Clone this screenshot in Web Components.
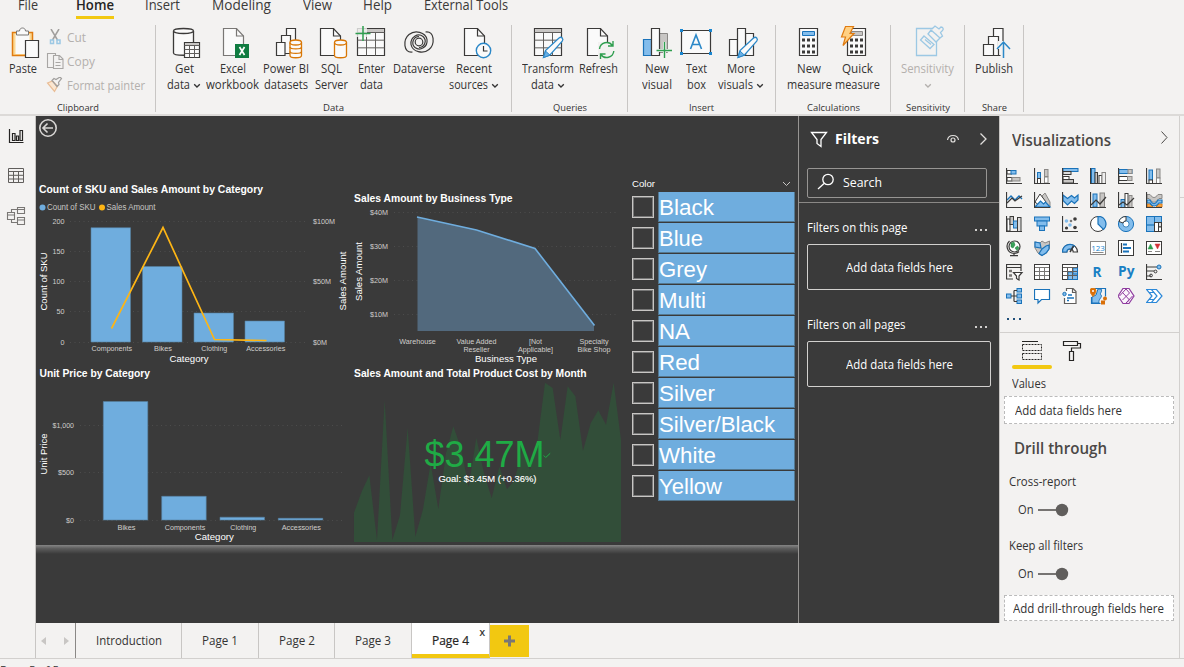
<!DOCTYPE html>
<html lang="en">
<head>
<meta charset="utf-8">
<title>Report editor</title>
<style>
html,body{margin:0;height:667px;overflow:hidden;background:#f3f2f1}
body{font-family:"Open Sans","Noto Sans",sans-serif;font-size:12.3px;color:#333}
</style>
</head>
<body>
<report-app></report-app>
<script>
const define = (name, css, html, extra) => customElements.define(name, class extends HTMLElement {
  connectedCallback() {
    if (this.shadowRoot) return;
    const t = document.createElement('template');
    t.innerHTML = '<style>:host{display:block;box-sizing:border-box}*{box-sizing:border-box}svg{display:block;flex:none}' + css + '</style>' + (typeof html === 'function' ? html(this) : html);
    this.attachShadow({mode: 'open'}).appendChild(t.content.cloneNode(true));
    if (extra) extra(this);
  }
});

/* One line of text condensed or widened to the width given in "w". */
define('fit-text', ':host{display:block;white-space:nowrap;flex:none}span{display:inline-block;transform-origin:0 50%}',
  '<span><slot></slot></span>', el => {
    const w = +el.getAttribute('w'), s = el.shadowRoot.querySelector('span');
    el.style.width = w + 'px';
    const n = s.getBoundingClientRect().width;
    if (n) s.style.transform = `scaleX(${w / n})`;
  });
const ft = (t, w, c = '') => `<fit-text w="${w}" class="${c}">${t}</fit-text>`;
const svg = (x, y, w, h, body, a = '') => `<svg width="${w}" height="${h}" viewBox="${x} ${y} ${w} ${h}" fill="none" ${a}>${body}</svg>`;

/* ---------- ribbon ---------- */
const K = 'stroke="#3b3a39" stroke-width="1.2"', W = 'fill="#fafafa"';
const pageShape = (x, c = '#3b3a39') => `<path d="M${x} 28.5h13l7 7.5v19.500h-20z" ${W} stroke="${c}" stroke-width="1.2"/><path d="M${x + 13} 28.500v7.500h7" stroke="${c}" stroke-width="1.2"/>`;
const grid = (x, y, w, h, hd) => `<path d="M${x} ${y}h${w}v${h}h-${w}z" ${W} ${K}/><path d="M${x + .6} ${y + .5}h${w - 1.200}v${hd}h-${w - 1.2}z" fill="#c8c6c4"/><path d="M${x} ${y + hd}h${w}M${x} ${y + hd + (h - hd) / 3}h${w}M${x} ${y + hd + (h - hd) * 2 / 3}h${w}M${x + w / 3} ${y + hd}v${h - hd}M${x + w * 2 / 3} ${y + hd}v${h - hd}" stroke="#605e5c" stroke-width="1"/>`;
const calc = x => `<path d="M${x} 28.500h18v27h-18z" ${W} ${K}/>` + [38.5, 44.5, 50.5].map(y => [3, 8, 13].map(d => `<path d="M${x + d - .5} ${y}h3v3h-3z" fill="#3b3a39"/>`).join('')).join('');
const pencil = (x) => `<path d="M${x} 57.500l2-7 13.500-12.500c2.500-2 5 .8 3.200 3.200L${x + 6.500} 55z" fill="#fafafa" stroke="#2b88c8" stroke-width="1.300"/><path d="M${x} 57.500l2-6.500 4.500 4.200z" fill="#69afe5" stroke="#2b88c8"/>`;
const cyl = (x, y, w, h, c, mid = '') => `<path d="M${x} ${y}v${h}c0 3 ${w} 3 ${w} 0v-${h}" ${W} stroke="${c}" stroke-width="1.300"/><ellipse cx="${x + w / 2}" cy="${y}" rx="${w / 2}" ry="2.500" ${W} stroke="${c}" stroke-width="1.300"/>${mid}`;
const swirl = 'M412.500 52C403 53.500 403 39.500 409 34.500C415 29.500 425.500 32 427 39.500C428 47 420 51.500 415 47.500C410.500 43.500 413.500 36.500 419 36.500';
const RI = {
  get: cyl(173.500, 31, 20, 22, '#3b3a39') + grid(184.500, 42.500, 15, 15, 3),
  excel: pageShape(222.500, '#797775') + '<path d="M234 44h14v14h-14z" fill="#107c41"/><path d="M238.500 47l5 8M243.500 47l-5 8" stroke="#fff" stroke-width="1.700"/>',
  pbi: `<path d="M286.500 28.500h9v20h-9z" ${W} ${K}/><path d="M281.500 35.500h9v18h-9z" ${W} ${K}/><path d="M276.500 42.500h8.500v13h-8.500z" ${W} ${K}/>` + cyl(290, 42.500, 11.500, 13, '#d97706', '<path d="M290 47c0 2.500 11.500 2.500 11.500 0M290 51.500c0 2.500 11.500 2.500 11.500 0" stroke="#d97706" stroke-width="1.300"/>'),
  sql: pageShape(320.500) + cyl(334.500, 42.500, 12, 13, '#d97706'),
  enter: grid(357.500, 28.500, 27, 27, 4) + '<path d="M355 25h12v12h-12z" fill="#f3f2f1" opacity=".8"/><path d="M363 26v15M355.500 33.500h15" stroke="#2f9e4f" stroke-width="1.500"/>',
  verse: `<g stroke="#3b3a39" stroke-width="1.200" fill="none"><path d="${swirl}"/><path d="${swirl}" transform="rotate(180 419 42)"/><circle cx="419" cy="42" r="3.800"/></g>`,
  recent: pageShape(464.500) + '<circle cx="483.500" cy="50.500" r="7.200" fill="#fafafa" stroke="#2b88c8" stroke-width="1.400"/><path d="M483.500 46v5h4" stroke="#333" stroke-width="1.200"/>',
  transform: grid(534.500, 28.500, 27, 27, 4) + pencil(543.500),
  refresh: pageShape(587.500) + '<path d="M598 42h17v17h-17z" fill="#f3f2f1"/><path d="M599.500 49a7.200 7.200 0 0 1 13-3.500M613.800 51a7.200 7.200 0 0 1-13 3.500M613 41v5h-5M600.500 59v-5h5" stroke="#2f9e4f" stroke-width="1.400"/>',
  visual: `<path d="M643.500 39.500h8v16h-8z" fill="#83bdec" stroke="#1a73ba" stroke-width="1.200"/><path d="M659.500 33.500h8v19h-8z" fill="#c8c6c4" stroke="#8a8886"/><path d="M651.500 28.500h8v27h-8z" ${W} ${K}/><path d="M664.500 42v16M657 50.500h15" stroke="#f3f2f1" stroke-width="3"/><path d="M664.500 42v16M656.500 50.500h15.500" stroke="#2f9e4f" stroke-width="1.400"/>`,
  text: `<path d="M681.500 30.500h29v23h-29z" ${W} ${K}/><path d="M680 29h3v3h-3zM709 29h3v3h-3zM680 52h3v3h-3zM709 52h3v3h-3z" fill="#1a86d0"/><path d="M690.500 49l5.500-14 5.500 14M692.500 44.500h7" stroke="#2b88c8" stroke-width="1.600"/>`,
  more: `<path d="M729.500 39.500h8v16h-8z" ${W} ${K}/><path d="M745.500 33.500h8v22h-8z" ${W} ${K}/><path d="M737.500 28.500h8v27h-8z" ${W} ${K}/>` + pencil(738),
  calc: calc(799.500) + '<path d="M802.500 31.500h12v4h-12z" fill="#83bdec" stroke="#1a73ba"/>',
  quick: calc(847.500) + '<path d="M851.500 31.500h11v4h-11z" fill="#c8c6c4" stroke="#8a8886"/><path d="M845.500 26.500h8l-3.500 7h4L843 45.500l2.500-8.500h-4z" fill="#ffd083" stroke="#e07b10" stroke-width="1.200"/>',
  sens: '<g stroke="#9cc8e4" stroke-width="1.300" fill="#f3f2f1"><path d="M916.500 28.500h20v27h-20z"/><path d="M924 36l10 8.500-4 4-9.500-8.500zM925 39.500l6 5"/><path d="M928 34l3-4 9 8-4 4zM932 29l3-3 4 3 2-2c2 0 3 2 1.500 3.500l-2 2 2 3.500-2.500 2"/></g>',
  publish: `<path d="M993.500 28.500h9.500v27h-9.500z" ${W} ${K}/><path d="M988.500 36.500h10v19h-10z" ${W} ${K}/><path d="M983.500 44.500h10v11h-10z" ${W} ${K}/><path d="M998 41h12v18h-9.500v-10h-2.500z" fill="#f3f2f1"/><path d="M1003.500 58v-15M997 49l6.500-7 6.500 7" stroke="#2b88c8" stroke-width="1.500"/>`
};
const chev = '<svg width="8" height="16" viewBox="0 0 8 16" fill="none"><path d="M1.200 7.200l2.800 2.800 2.800-2.800" stroke="currentColor" stroke-width="1.300"/></svg>';
const btn = (icon, cx, w, l1, w1, l2, w2, ch, cls = '') => `<ribbon-button w="${w}" class="${cls}">${svg(cx - 18, 25, 36, 36, RI[icon])}<div class="l">${ft(l1, w1)}</div><div class="l">${l2 ? ft(l2, w2) : ''}${ch ? chev : ''}</div></ribbon-button>`;
define('ribbon-button', ':host{display:flex;flex-direction:column;align-items:center;flex:none}', '<slot></slot>', el => el.style.width = el.getAttribute('w') + 'px');

define('ribbon-group', ':host{height:87px;border-right:1px solid #c8c6c4;display:flex;flex-direction:column;flex:none}.b{display:flex;height:75px;flex:none}.n{height:12px;display:flex;justify-content:center;font-size:9.700px;line-height:15px;color:#333}',
  el => `<div class="b"><slot></slot></div><div class="n">${ft(el.getAttribute('name'), el.getAttribute('nw'))}</div>`,
  el => { el.style.width = el.getAttribute('w') + 'px'; el.shadowRoot.querySelector('.b').style.paddingLeft = el.getAttribute('p') + 'px'; });

define('app-ribbon', `:host{height:116px;border-bottom:2px solid #dcdad8;overflow:hidden}
.menu{display:flex;height:25px;padding-left:18px;font-size:13.600px;line-height:21px;color:#3b3a39}
.menu>*{margin-top:-6px}.home{font-weight:600;color:#252423;height:25px;border-bottom:3px solid #f2c811}
.row{display:flex}.l{display:flex;height:16px;line-height:16px;gap:2px;justify-content:center}
.l svg{margin-left:1px}.dim{color:#b3b0ad}.col{padding-top:4px}
.col div{display:flex;height:24px;line-height:17px;gap:3px;color:#b3b0ad}`,
`<div class="menu">${ft('File', 20)}<i style="width:38px"></i>${ft('Home', 38, 'home')}<i style="width:31px"></i>${ft('Insert', 35)}<i style="width:32px"></i>${ft('Modeling', 59)}<i style="width:32px"></i>${ft('View', 29)}<i style="width:31px"></i>${ft('Help', 29)}<i style="width:32px"></i>${ft('External Tools', 84)}</div>
<div class="row">
<ribbon-group w="156" p="3" name="Clipboard" nw="42">
<ribbon-button w="40">${svg(6, 25, 34, 36, '<path d="M12.500 32.500h20v23h-20z" fill="#fbd893" stroke="#e07b10" stroke-width="1.500"/><path d="M15.500 34h14v20h-14z" fill="#fafafa"/><path d="M16.500 35v-4h3c0-4 6-4 6 0h3v4z" fill="#fafafa" stroke="#797775"/><path d="M25.500 40.500h13v17h-13z" fill="#fafafa" stroke="#3b3a39" stroke-width="1.200"/>')}<div class="l">${ft('Paste', 28)}</div></ribbon-button>
<div class="col" style="padding-left:3px">
<div>${svg(46, 29, 18, 17, '<path d="M51 29l6.500 11M59 29l-6.500 11" stroke="#a19f9d" stroke-width="1.500"/><path d="M50.500 40h3v3.500h-3zM57 40h3v3.500h-3z" stroke="#9cc8e4" stroke-width="1.500"/>')}${ft('Cut', 19)}</div>
<div>${svg(46, 52, 18, 17, '<path d="M53.500 66.500h-6v-14h8v2M53.500 54.500h6l3.500 3.500v9.500h-9.500zM59 54.500v4h4M55.500 61.500h5M55.500 64.500h5" stroke="#a8a6a4" stroke-width="1.100"/>')}${ft('Copy', 28)}</div>
<div>${svg(47, 76, 18, 17, '<path d="M48.500 82l5-2 5 5-3 5.500z" fill="#fbe6d0" stroke="#e9bd96" stroke-width="1.200"/><path d="M53 79.500l2-2 2 1 4-2.500 1.500 1.500-3 4 .5 2-2 2z" stroke="#a19f9d" stroke-width="1.200"/>')}${ft('Format painter', 78)}</div></div>
</ribbon-group>
<ribbon-group w="356" p="6" name="Data" nw="21">
${btn('get', 184, 44, 'Get', 19, 'data', 23, 1)}${btn('excel', 232, 53, 'Excel', 26, 'workbook', 53)}${btn('pbi', 286, 54, 'Power BI', 46, 'datasets', 44)}${btn('sql', 331, 36, 'SQL', 21, 'Server', 33)}${btn('enter', 371, 44, 'Enter', 27, 'data', 23)}${btn('verse', 419, 52, 'Dataverse', 52)}${btn('recent', 474, 58, 'Recent', 36, 'sources', 39, 1)}
</ribbon-group>
<ribbon-group w="116" p="9" name="Queries" nw="34">${btn('transform', 548, 54, 'Transform', 52, 'data', 23, 1)}${btn('refresh', 598, 46, 'Refresh', 39)}</ribbon-group>
<ribbon-group w="148" p="12" name="Insert" nw="25">${btn('visual', 657, 34, 'New', 24, 'visual', 30)}${btn('text', 696, 44, 'Text', 21, 'box', 19)}${btn('more', 741, 46, 'More', 28, 'visuals', 35, 1)}</ribbon-group>
<ribbon-group w="115" p="9" name="Calculations" nw="53">${btn('calc', 809, 48, 'New', 24, 'measure', 45)}${btn('quick', 857, 48, 'Quick', 31, 'measure', 45)}</ribbon-group>
<ribbon-group w="74" p="4" name="Sensitivity" nw="44">${btn('sens', 927, 64, 'Sensitivity', 53, '', 0, 1, 'dim')}</ribbon-group>
<ribbon-group w="59" p="7" name="Share" nw="25">${btn('publish', 994, 44, 'Publish', 38)}</ribbon-group>
</div>`);

/* ---------- left rail ---------- */
define('view-rail', ':host{width:36px;border-right:1px solid #c8c6c4;flex:none;padding-top:10px}svg{margin-bottom:22px}svg+svg+svg{margin-top:-3px}',
 svg(0, 126, 35, 19, '<path d="M9.500 129v13.500h14M12.500 133.500h2.500v7h-2.500zM16.500 136h2v4.500h-2zM20 130.500h2.500v10h-2.500z" stroke="#252423" stroke-width="1.200"/>') +
 svg(0, 167, 35, 19, '<path d="M8.500 168.500h15v14h-15zM8.500 171.500h15M8.500 175.300h15M8.500 179h15M13.500 171v11M18.500 171v11" stroke="#605e5c"/>') +
 svg(0, 205, 35, 22, '<path d="M17.500 207.500h7v6h-7zM17.500 209.500h7M17.500 217.500h7v7h-7zM17.500 220h7M7.500 212.500h7v7h-7zM7.500 215h7M11.500 212v-2.500h6M11.500 219.500v3h6" stroke="#797775" stroke-width="1.100"/>'));

/* ---------- charts ---------- */
const tx = (t, x, y, w, size, c, a = 'start', more = '') => `<text x="${x}" y="${y}" textLength="${w}" lengthAdjust="spacingAndGlyphs" font-size="${size}" fill="${c}" text-anchor="${a}" ${more}>${t}</text>`;
const G = '#c8c6c4';
const title = (t, x, y, w) => tx(t, x, y, w, 10.800, '#fff', 'start', 'font-weight="bold"');
const lab = (t, x, y, w, a = 'middle') => tx(t, x, y, w, 7.500, '#d0cecc', a);
const ax = (t, x, y, w) => tx(t, x, y, w, 9.500, '#fff', 'middle');
const vert = (t, x, y, w) => tx(t, x, y, w, 9.300, '#fff', 'middle', `transform="rotate(-90 ${x} ${y})"`);
const dots = (x1, x2, ys) => ys.map(y => `<path d="M${x1} ${y}H${x2}" stroke="#4c4c4c" stroke-dasharray="1 3.500"/>`).join('');
const bar = (x, y, w, b) => `<path d="M${x} ${y}h${w}V${b}h-${w}z" fill="#6fadde" stroke="#557f9f" stroke-width=".6"/>`;
const chartCss = 'text{font-family:"Liberation Sans",Arial,sans-serif}';
define('combo-chart', chartCss, svg(36, 180, 314, 186,
  title('Count of SKU and Sales Amount by Category', 39, 192.700, 224) +
  '<circle cx="42.500" cy="207.500" r="3" fill="#6fadde"/><circle cx="102" cy="207.500" r="3" fill="#fdb515"/>' +
  tx('Count of SKU', 47, 210, 48.500, 8.300, G) + tx('Sales Amount', 106.500, 210, 49, 8.300, G) +
  dots(70, 308, [221.500, 251.500, 281.500, 311.500, 342.500]) +
  lab('200', 64.500, 224, 12, 'end') + lab('150', 64.500, 254, 12, 'end') + lab('100', 64.500, 284, 12, 'end') + lab('50', 64.500, 314.300, 8, 'end') + lab('0', 64.500, 345, 4, 'end') +
  lab('$100M', 313, 224, 22, 'start') + lab('$50M', 313, 284, 18, 'start') + lab('$0M', 313, 345, 14, 'start') +
  bar(91, 227.700, 39.500, 342) + bar(142.500, 266.500, 39.500, 342) + bar(194, 313, 39.500, 342) + bar(245, 321, 39.500, 342) +
  '<path d="M111.500 328.500L163 227.500l51.500 112 52 1" stroke="#fdb515" stroke-width="1.700"/>' +
  lab('Components', 111.800, 351.200, 40.500) + lab('Bikes', 163, 351.200, 18) + lab('Clothing', 214.300, 351.200, 26) + lab('Accessories', 265.800, 351.200, 39) +
  ax('Category', 189, 362, 39) + vert('Count of SKU', 47, 281.500, 58) + vert('Sales Amount', 346, 281, 59)));
define('area-chart', chartCss, svg(350, 180, 275, 186,
  title('Sales Amount by Business Type', 354, 201.700, 158.500) + dots(394, 618, [212.500, 246.500, 280.500, 314.500]) +
  lab('$40M', 370, 215.200, 18, 'start') + lab('$30M', 370, 249.200, 18, 'start') + lab('$20M', 370, 283, 18, 'start') + lab('$10M', 370, 316.500, 18, 'start') +
  '<path d="M417.500 217l59 13 58.500 18.500L594 325v6H417.500z" fill="#52697d"/><path d="M417 217l59.500 13 58.500 18.500L594.500 325.500" stroke="#6fadde" stroke-width="1.600"/>' +
  lab('Warehouse', 417.500, 344.300, 36.500) + lab('Value Added', 476.500, 344.300, 40) + lab('Reseller', 476.500, 352.300, 26) + lab('[Not', 535.500, 344.300, 13) + lab('Applicable]', 535.500, 352.300, 35) + lab('Specialty', 594, 344.300, 29) + lab('Bike Shop', 594, 352.300, 33) +
  ax('Business Type', 506, 362, 62) + vert('Sales Amount', 362, 271.500, 59)));
define('bar-chart', chartCss, svg(36, 366, 314, 179,
  title('Unit Price by Category', 39.500, 376.700, 110.500) + dots(80, 345, [425.500, 472.500, 520.500]) +
  lab('$1,000', 74, 428, 21.500, 'end') + lab('$500', 74, 475, 16, 'end') + lab('$0', 74, 523, 8, 'end') +
  bar(103.300, 401.500, 44.500, 520) + bar(161.700, 496.300, 44.500, 520) + bar(220, 517.200, 44.500, 520) + bar(278.300, 518.300, 44.500, 520) +
  lab('Bikes', 126.500, 530, 18) + lab('Components', 185, 530, 40.500) + lab('Clothing', 243.300, 530, 26) + lab('Accessories', 301.300, 530, 39) +
  ax('Category', 214.300, 540, 39) + vert('Unit Price', 47, 454, 41)));
define('kpi-card', chartCss, svg(350, 366, 275, 179,
  '<path transform="translate(345 360) scale(.33333)" fill="#324e39" d="M27 546V458L50 395 73 346 96 541 119 121 142 541 165 466 188 203 211 531 234 448 257 310 280 448 303 280 325 199 348 265 371 382 394 233 417 340 440 415 463 320 486 388 509 360 532 265 555 330 578 240 600 68 623 84 646 240 668 79 691 109 714 272 737 190 760 151 783 194 806 68 828 240V546z"/>' +
  title('Sales Amount and Total Product Cost by Month', 354, 376.700, 232.500) +
  tx('$3.47M', 424.500, 467, 120, 36, '#1fab45') + '<path d="M543.700 455.500l2 2 4.500-4.200" stroke="#1fab45"/>' +
  tx('Goal: $3.45M (+0.36%)', 438.500, 481.700, 98, 9.300, '#fff', 'start', 'stroke="#fff" stroke-width=".15"')));
define('color-slicer', `:host{font-family:"Liberation Sans",Arial,sans-serif;padding:12px 0 0 7px;width:173px}
.h{display:flex;justify-content:space-between;height:14px;line-height:12px;font-size:9.500px;color:#fff;padding-right:7px}
.h svg{margin-top:-1px}
.r{display:flex;height:30px;margin-bottom:1px;align-items:center;gap:4px}
i{width:22px;height:22px;border:1px solid #c8c6c4;outline:1px solid #777;outline-offset:-2px}
b{font-weight:400;width:137px;height:30px;background:#6fadde;border:1px solid #547890;border-width:0 1px 1px;color:#fff;font-size:22.400px;line-height:31px;display:block}`,
 `<div class="h">${ft('Color', 23)}<svg width="9" height="14" viewBox="0 0 9 14" fill="none"><path d="M1 5l3.500 3.500L8 5" stroke="#c8c6c4"/></svg></div>` +
 [['Black', 55], ['Blue', 44], ['Grey', 48], ['Multi', 47], ['NA', 31], ['Red', 41], ['Silver', 56], ['Silver/Black', 116], ['White', 57], ['Yellow', 63]].map(([n, w]) => `<div class="r"><i></i><b>${ft(n, w)}</b></div>`).join(''));

define('report-canvas', `:host{width:762px;background:#3a3a3a;flex:none}
.t{height:64px;padding:1px 0 0 1px}.g{display:grid;grid-template-columns:314px 275px 173px;height:365px}
.c{display:flex;flex-direction:column}.s{height:9px;background:linear-gradient(#858585,#5c5c5c 40%,#3a3a3a)}`,
 `<div class="t">${svg(37, 117, 22, 22, '<circle cx="48" cy="128" r="8.200" stroke="#d8d6d4" stroke-width="1.600"/><path d="M53 128h-9.500M47.500 123.500L43 128l4.500 4.500" stroke="#d8d6d4" stroke-width="1.600"/>')}</div>
 <div class="g"><div class="c"><combo-chart></combo-chart><bar-chart></bar-chart></div><div class="c"><area-chart></area-chart><kpi-card></kpi-card></div><color-slicer style="margin-top:-14px"></color-slicer></div><div class="s"></div>`);

/* ---------- filters ---------- */
define('filter-pane', `:host{width:202px;flex:none;background:#3a3a3a;border-left:1px solid #979593;border-right:1px solid #c8c6c4;color:#fff}
.h{display:flex;height:52px;align-items:center;padding:0 0 6px 11px}.h fit-text{font-weight:700;font-size:14.500px;margin-top:-2px}
.s{margin:0 0 4px 8px;width:180px;height:30px;border:1px solid #979593;border-radius:2px;display:flex;align-items:center;padding:0 0 2px 9px;gap:8px}
.d{border-top:1px solid #8a8886;padding:0 8px}.n{display:flex;justify-content:space-between;height:20px;line-height:20px;padding-right:4px}
.x{height:46px;width:184px;border:1px solid #d2d0ce;border-radius:2px;display:flex;align-items:center;justify-content:center}
.n svg{margin-top:3px}`,
 `<div class="h">${svg(810, 129, 18, 18, '<path d="M811.500 131.500h15l-5.500 7v7l-4-3v-4z" stroke="#fff" stroke-width="1.300"/>')}<i style="width:7px"></i>${ft('Filters', 44)}<i style="width:67px"></i>${svg(946, 131, 14, 14, '<path d="M947.500 139c1-6 10-6 11 0" stroke="#e1dfdd" stroke-width="1.200"/><circle cx="953" cy="139" r="2" stroke="#e1dfdd" stroke-width="1.200"/>')}<i style="width:18px"></i>${svg(978, 130, 12, 16, '<path d="M980.500 132.500l5.500 5.500-5.500 5.500" stroke="#e1dfdd" stroke-width="1.300"/>')}</div>
 <div class="s">${svg(817, 174, 18, 18, '<circle cx="828" cy="180.500" r="5.200" stroke="#fff" stroke-width="1.300"/><path d="M824 184.500l-6 5.500" stroke="#fff" stroke-width="1.300"/>')}${ft('Search', 39)}</div>
 <div class="d"><div style="height:15px"></div>` + ['Filters on this page', 'Filters on all pages'].map((t, i) => `<div class="n">${ft(t, i ? 98.5 : 100.5)}<svg width="12" height="14"><path d="M0 8h2v2H0zM5 8h2v2H5zM10 8h2v2h-2z" fill="#d2d0ce"/></svg></div><div style="height:6px"></div><div class="x">${ft('Add data fields here', 107)}</div><div style="height:25px"></div>`).join('') + '</div>');

/* ---------- visualizations ---------- */
const D = '#3b3a39', B = '#1a73ba', F = '#83bdec', S = '#c8c6c4';
const r = (x, y, w, h, f, s) => `<rect x="${x}" y="${y}" width="${w}" height="${h}" fill="${f}" stroke="${s || f}"/>`;
const axis = `<path d="M.5 0v15.500H16" stroke="${D}" stroke-width="1.200"/>`;
const p = (d, s, w = 1.200, f = 'none') => `<path d="${d}" stroke="${s}" stroke-width="${w}" fill="${f}"/>`;
const VI = [
 r(1, 2.500, 4.500, 3.500, '#fff', D) + r(5, 2.500, 5, 3.500, F, B) + r(1, 9.500, 5, 3.500, '#fff', D) + r(6, 9.500, 8, 3.500, S, '#8a8886') + axis,
 r(3.500, 4.500, 3, 6, F, B) + r(3.500, 10.500, 3, 5, '#fff', D) + r(10.500, 1.500, 3.500, 7, S, '#8a8886') + r(10.500, 9, 3.500, 6, '#fff', '#8a8886') + axis,
 r(1, .5, 15, 3, F, B) + r(1, 3.500, 8, 3, '#ddd', D) + r(1, 8.500, 6, 3, '#fff', D) + r(1, 11.500, 10.500, 3.500, S, D) + axis,
 r(1.500, .5, 3.500, 15, F, B) + r(5, 4.500, 2.500, 11, S, D) + r(9, 7.500, 3, 8, '#fff', D) + r(12, 4.500, 3.500, 11, '#eee', '#8a8886') + axis,
 r(1, 1.500, 13, 4, F, B) + r(10, 1.500, 4, 4, S, '#8a8886') + r(1, 8.500, 9, 4, '#fff', D) + r(9.500, 8.500, 4.500, 4, S, '#8a8886') + axis,
 r(3, 2, 3.500, 10, F, B) + r(3, 12, 3.500, 3.500, '#fff', D) + r(10.500, 1, 3.500, 9, S, '#8a8886') + r(10.500, 10, 3.500, 5.500, '#fff', '#8a8886') + axis,
 p('M1 8l4-4 4 4 4-4 3 3', B, 1.400) + p('M1 11l5-5 3 3 7-5', D) + axis,
 p('M8 4l3-3 5 9v5H9z', '#8a8886', 1, S) + p('M1 10l5-8 6 8-5 5z', D, 1, '#fff') + p('M1 15l5.500-6 3 3 2-2 4.500 5z', B, 1.200, F) + axis,
 p('M1 3l4.500 3.500 4-3 3 2.500L16 3v5l-3.500 3.500-3-2.500-4 4L1 8.500z', B, 1.200, F) + axis,
 r(3, 2, 4, 13, F, B) + r(10, 1, 4.500, 14, S, '#8a8886') + p('M1 13l5-5 4 4 6-7', D) + axis,
 r(3, 7.500, 4, 8, F, B) + r(7, 1.500, 3, 14, '#fff', D) + r(11, 3.500, 3, 12, S, '#8a8886') + p('M1 13l4-3 4 3 7-7', D) + axis,
 p('M1 2.500h3c3 4 5 4 8 0h4v4h-3c-4 5-6 5-10 0H1z', '#8a8886', 1, S) + p('M1 12h3l3 3H1zM16 12h-3l-3 3h6z', '#e07b10', 1, '#f5a84e') + p('M1 8h3c3 5 5 5 8 0h4v3h-3c-3 4-7 4-9 0H1z', B, 1.200, F) + axis,
 r(1, 3, 3, 12, '#fff', D) + r(4, .5, 3.500, 8, S, D) + r(7.500, 5, 4, 7, F, B) + r(11.500, 1.500, 3.500, 14, '#ddd', D) + axis,
 r(.5, 1, 15, 4, F, B) + r(3, 5, 10, 5, F, B) + r(5.500, 10, 5, 4.500, F, B),
 '<circle cx="4.500" cy="5" r="1.800" fill="#83bdec"/><circle cx="8" cy="9" r="1.800" fill="#83bdec"/><circle cx="13" cy="3" r="1.800" fill="#3b3a39"/><circle cx="13" cy="11.500" r="1.800" fill="#3b3a39"/><circle cx="9" cy="5" r="1.300" fill="#797775"/><circle cx="4.500" cy="12" r="1.600" fill="#3b3a39"/>' + axis,
 '<circle cx="8" cy="8" r="7.500" fill="#fff" stroke="#3b3a39"/>' + p('M8 .5V8l5.500 5.500A7.500 7.500 0 0 0 8 .5z', B, 1.200, F),
 '<circle cx="8" cy="8" r="5.500" stroke="#83bdec" stroke-width="4"/><circle cx="8" cy="8" r="7.600" stroke="#1a73ba"/><circle cx="8" cy="8" r="3.200" fill="#fff" stroke="#1a73ba"/>' + p('M1 5.500A7.500 7.500 0 0 1 8 .5v4.300A3.200 3.200 0 0 0 5 7z', D, 1, '#fff'),
 r(.5, .5, 8, 15, F, B) + r(8.500, .5, 7, 6, F, B) + r(8.500, 6.500, 4, 9, '#fff', D) + r(12.500, 6.500, 3, 4.500, '#ddd', D) + r(12.500, 11, 3, 4.500, '#fff', D) + p('M1 9h7', B),
 '<circle cx="8.500" cy="6.500" r="5.500" fill="#fff" stroke="#3b3a39" stroke-width="1.200"/>' + p('M5 3l3-1 1 3-2 3-2-1z', '#217a3c', .5, '#39a35a') + p('M9 8l2.500-2 1.500 2-2 2.500z', '#217a3c', .5, '#39a35a') + p('M3.500 1C-1 5 1 13 8 13.500c3 0 4-1 5-2M8 13.500v2M4 15.700h8', D),
 p('M1 2l5 1 2-2 3 2 4.500-2v7l-3 5-5 2.500L4 13 1 8z', '#8a8886', 1, S) + p('M1 2l5 1 1 5-6-1zM8 9l4-3 3-1v4l-3 4-4 2.500-3-2z', B, 1.200, F),
 p('M.5 12a7.500 7.500 0 0 1 15 0h-4.300a3.200 3.200 0 0 0-6.400 0z', D, 1.200, '#fff') + p('M.5 12a7.500 7.500 0 0 1 11.800-6.200L9.500 9.200A3.200 3.200 0 0 0 4.800 12z', B, 1.200, F) + p('M8 12l3.500-6', D, 1.500),
 r(.5, 1.500, 15, 13, '#fff', '#8a8886') + '<text x="8" y="10.500" text-anchor="middle" font-size="8" font-family="Open Sans,sans-serif" fill="#1a86d0">123</text>' + p('M2.500 12.500h11', '#8a8886', 1),
 r(.5, .5, 15, 15, '#fff', D) + p('M3.500 3v10', D) + p('M5 4.500h4M5 8h8M5 11.500h6', B, 1.800),
 r(.5, 1.500, 15, 13, '#fff', D) + p('M2 9l2.500-5L7 9z', '#2f9e4f', .5, '#2f9e4f') + p('M9 4h5l-2.500 5z', '#d13438', .5, '#d13438') + p('M2 11.500h4M9 11.500h5', '#8a8886', 1),
 p('M7 15H.5V.5h14.500V7M.5 3.500H15', D) + p('M3 7h3M3 11.500h3', '#797775', 2.500) + p('M7.500 8.500H16l-3 3.500v4l-2.500-1.500V12z', D, 1.200, '#fff'),
 r(.5, .5, 15, 15, '#fff', D) + p('M1 3.500h14M1 7.500h14M1 11.500h14M5.500 3.500V15M10.500 3.500V15', '#797775', 1),
 r(.5, .5, 15, 15, '#fff', D) + r(6, 8, 9.500, 7.500, F, B) + r(11, 4, 4.500, 6, F, B) + p('M1 3.500h14M1 7.500h14M1 11.500h14M5.500 3.500V15M10.500 3.500V15', '#605e5c', 1),
 '<text x="2.500" y="13" font-size="15" font-weight="700" font-family="Open Sans,sans-serif" fill="#1a80c4" textLength="9" lengthAdjust="spacingAndGlyphs">R</text>',
 '<text x="0" y="12" font-size="14.500" font-weight="700" font-family="Open Sans,sans-serif" fill="#1a80c4" textLength="16.500" lengthAdjust="spacingAndGlyphs">Py</text>',
 p('M1 3h10M1 7h7M1 12h4', D) + '<circle cx="13" cy="3" r="2" fill="#83bdec" stroke="#1a73ba"/><circle cx="9.500" cy="7.500" r="1.400" stroke="#3b3a39"/><circle cx="5" cy="11.500" r="1.400" stroke="#3b3a39"/>' + axis,
 r(.5, 6, 4.500, 4, F, B) + r(11, .5, 4.500, 3.500, F, B) + r(11, 6, 4.500, 4, F, B) + r(11, 12, 4.500, 3.500, F, B) + p('M5 8h6M8 2.500v11M8 2.500h3M8 13.500h3', D),
 p('M.5 1.500h15v10H7.500L4 15v-3.500H.5z', B, 1.200, '#fff'),
 p('M4.500 3V.5h6.500l3 3v12H2.500V10M10.500 1v3.500H14', '#605e5c', 1.200, '#fff') + '<circle cx="2.500" cy="6" r="1.700" stroke="#1a73ba" fill="#83bdec"/>' + p('M6 7h4M5 10h7M5 12.500h2', B, 1.300),
 p('M5 .5h10.500v8M1.500 9v6.500h9', B, 1.200) + p('M8 1h3c2 3-2 4 0 6s-3 4-2 8H2V9l4-2z', B, 1, F) + p('M3 0a3 3 0 0 1 3 3c0 2-3 5.500-3 5.500S0 5 0 3a3 3 0 0 1 3-3z', '#e07b10', 1, '#d96f08') + '<circle cx="3" cy="3" r="1" fill="#fff"/><circle cx="15" cy="10.500" r="2" fill="#d96f08"/><path d="M11 12.500h4v4h-4z" fill="#d96f08"/>',
 p('M5 .5h6L16 8l-5 7.500H5L0 8z', '#8e3a9e', 1.200, '#fbf5fc') + p('M8 1l3.500 4L4.500 12M4.500 4.500l7 7.500L8 15M8 1L1.500 8M8 15l6.500-7', '#8e3a9e', 1),
 p('M.5 1.500h5L11 8l-5.500 6.500h-5L6 8zM6 1.500h4.500L16 8l-5.500 6.500H6', '#2b88d8', 1.200, '#fff') + p('M3 4.500h5M3 11.500h5', '#2b88d8', 1)
];
define('viz-gallery', ':host{display:grid;grid-template-columns:repeat(6,28px);grid-auto-rows:24px;padding-left:6px;height:144px}',
  VI.map(v => `<svg width="18" height="18" viewBox="0 0 18 18" fill="none">${v}</svg>`).join(''));
define('toggle-row', ':host{display:flex;height:20px;line-height:20px;padding-left:18px;align-items:center;gap:4px}',
  ft('On', 15.500) + '<svg width="32" height="14" viewBox="0 0 32 14"><path d="M0 7h20" stroke="#605e5c" stroke-width="1.700"/><circle cx="24" cy="7" r="6.200" fill="#605e5c"/></svg>');
define('viz-pane', `:host{width:180px;flex:none;border-right:1px solid #d2d0ce;margin-left:0;background:#f3f2f1}
.h{display:flex;justify-content:space-between;height:52px;padding:12px 9px 0 12px;line-height:25px}.t{font-size:15.500px;font-weight:600;color:#4a4846}
.m{height:20px;padding:6px 0 0 7px}.v{height:33px;border-top:1px solid #d2d0ce;display:flex;padding:5px 0 0 18px;gap:12px}
.y{width:40px;height:4px;border-radius:2px;background:#f2c811;margin-left:12px}
.l{height:20px;line-height:21px;padding-left:12px}.x{margin-left:4px;width:170px;background:#fff;border:1px dashed #bbb;display:flex;align-items:center;padding-left:10px}
.a{padding-left:9px}`,
 `<div class="h">${ft('Visualizations', 99, 't')}${svg(1159, 130, 10, 16, '<path d="M1161.500 132.500l5.500 6-5.500 6" stroke="#4a4846"/>', 'style="margin-top:1px;margin-right:1px"')}</div>
 <viz-gallery></viz-gallery><div class="m"><svg width="16" height="3"><path d="M0 0h2v2H0zM6 0h2v2H6zM12 0h2v2h-2z" fill="#1f4e79"/></svg></div>
 <div class="v">${svg(1018, 338, 30, 24, '<path d="M1022 341.500h16" stroke="#252423"/><path d="M1022.500 344.500h19v6h-19zM1022.500 353.500h19v6h-19z" stroke="#252423" stroke-dasharray="2 1"/>')}${svg(1060, 338, 24, 24, '<path d="M1063.500 341.500h14v4h-14zM1077.500 343.500h3v4.500h-9v4M1069.500 351.500h4v9h-4z" stroke="#252423" stroke-width="1.200"/>')}</div>
 <div class="y"></div><div style="height:4px"></div><div class="l">${ft('Values', 34)}</div><div style="height:3px"></div>
 <div class="x" style="height:28px">${ft('Add data fields here', 107)}</div><div style="height:13px"></div>
 <div class="l" style="height:24px;line-height:23px;padding-left:14px">${ft('Drill through', 93, 't')}</div><div style="height:10px"></div>
 <div class="l a">${ft('Cross-report', 67)}</div><div style="height:9px"></div><toggle-row></toggle-row><div style="height:15px"></div>
 <div class="l a">${ft('Keep all filters', 74)}</div><div style="height:9px"></div><toggle-row></toggle-row><div style="height:11px"></div>
 <div class="x" style="height:26px;padding-left:8px">${ft('Add drill-through fields here', 151)}</div>`);

/* ---------- page tabs ---------- */
define('page-tabs', `:host{display:flex;height:35px;width:964px}
.n{width:40px;border-right:1px solid #8a8886;display:flex;align-items:center;gap:16px;padding-left:5px}
.p{height:35px;line-height:36px;border-right:1px solid #c8c6c4;display:flex;justify-content:center}
.on{background:#fff;border-bottom:4px solid #f2c811;color:#252423;position:relative;-webkit-text-stroke:.2px}
.on b{position:absolute;right:4px;top:2px;font-size:10.500px;line-height:15px;font-weight:400}
.add{width:39px;height:32px;margin-top:2px;background:#f2c811;display:flex;align-items:center;justify-content:center}`,
 `<div class="n"><svg width="6" height="8"><path d="M5 0v8L0 4z" fill="#c8c6c4"/></svg><svg width="6" height="8"><path d="M1 0v8l5-4z" fill="#c8c6c4"/></svg></div>
 <div class="p" style="width:106px">${ft('Introduction', 66)}</div><div class="p" style="width:77px">${ft('Page 1', 36)}</div><div class="p" style="width:76px">${ft('Page 2', 36)}</div><div class="p" style="width:77px">${ft('Page 3', 36)}</div><div class="p on" style="width:78px">${ft('Page 4', 37)}<b>x</b></div>
 <div class="add"><svg width="12" height="12"><path d="M5.500 .5v11M0 6h11" stroke="#797775" stroke-width="3"/></svg></div>`);

define('report-app', `:host{display:flex;flex-direction:column;width:1184px;height:667px;overflow:hidden;background:#f3f2f1}
.m{display:flex;height:542px}.w{display:flex;flex-direction:column;width:964px;flex:none}.u{display:flex;height:507px}
.e{flex:1;padding-top:81px}.e i{display:block;height:1px;background:#d2d0ce}
.f{height:9px;border-top:1px solid #d2d0ce;overflow:hidden;font-size:11px;line-height:14px;padding-top:4px}`,
 `<app-ribbon></app-ribbon><div class="m"><view-rail></view-rail><div class="w"><div class="u"><report-canvas></report-canvas><filter-pane></filter-pane></div><page-tabs></page-tabs></div><viz-pane></viz-pane><div class="e"><i></i></div></div><div class="f">${ft('Page 5 of 5', 59)}</div>`);
</script>
</body>
</html>
